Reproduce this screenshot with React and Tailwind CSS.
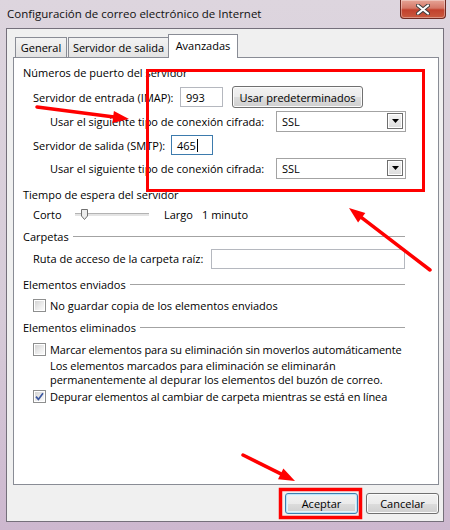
import React from "react";

const RED = "#ff0000";

// Annotation arrow: a thick red shaft with a filled triangular head at (x2, y2)
function Arrow({ x1, y1, x2, y2, head = 16, spread = 6, width = 3.5 }) {
  const dx = x2 - x1;
  const dy = y2 - y1;
  const len = Math.hypot(dx, dy);
  const ux = dx / len;
  const uy = dy / len;
  const bx = x2 - ux * head;
  const by = y2 - uy * head;
  const px = -uy;
  const py = ux;
  const pts = `${x2},${y2} ${bx + px * spread},${by + py * spread} ${bx - px * spread},${by - py * spread}`;
  return (
    <g>
      <line x1={x1} y1={y1} x2={bx + ux * 3} y2={by + uy * 3} stroke={RED} strokeWidth={width} strokeLinecap="round" />
      <polygon points={pts} fill={RED} />
    </g>
  );
}

function GroupTitle({ text, line, className = "" }) {
  return (
    <div className={`flex items-center h-[16px] pl-[9px] pr-[33px] ${className}`}>
      <span className="whitespace-nowrap">{text}</span>
      {line && <div className="flex-1 ml-[4px] h-px bg-[#a3a3a3]" />}
    </div>
  );
}

function Checkbox({ checked }) {
  return (
    <div className="w-[13px] h-[13px] border border-[#8e8f8f] bg-white p-px shrink-0">
      <div className="w-full h-full bg-[linear-gradient(135deg,#d4d4d4_0%,#ededed_60%,#fafafa_100%)] flex items-center justify-center">
        {checked && (
          <svg width="9" height="9" viewBox="0 0 9 9">
            <path d="M1 4.6 L3.4 7.4 L8 1.2" fill="none" stroke="#3b57a0" strokeWidth="1.7" />
          </svg>
        )}
      </div>
    </div>
  );
}

function Select({ value }) {
  return (
    <div className="w-[130px] h-[21px] border border-[#a3a3a3] bg-white flex items-center pl-[5px] pr-[2px]">
      <span className="flex-1">{value}</span>
      <div className="w-[16px] h-[16px] border border-[#6f6f6f] bg-[linear-gradient(to_bottom,#f4f4f4,#dcdcdc)] shadow-[inset_0_0_0_1px_#ffffff] flex items-center justify-center">
        <svg width="7" height="4" viewBox="0 0 7 4">
          <path d="M0 0 H7 L3.5 4 Z" fill="#000" />
        </svg>
      </div>
    </div>
  );
}

function Button({ children, primary, className = "" }) {
  return (
    <div
      className={`flex items-center justify-center rounded-[3px] border bg-[linear-gradient(to_bottom,#f2f2f2_0%,#ebebeb_50%,#dddddd_50%,#cfcfcf_100%)] ${
        primary
          ? "border-[#3c7fb1] shadow-[inset_0_0_0_1px_#bfe4f7,inset_0_0_0_2px_#e3f3fb]"
          : "border-[#707070] shadow-[inset_0_0_0_1px_#fbfbfb]"
      } ${className}`}
    >
      {children}
    </div>
  );
}

function Slider() {
  return (
    <div className="relative w-[74px] h-[12px] flex items-center">
      <div className="w-full h-[3px] border-t border-[#b3b3b3] bg-[#e4e4e4]" />
      <svg className="absolute left-[6px] top-[1px]" width="7" height="11" viewBox="0 0 7 11">
        <path d="M0.5 0.5 H6.5 V7 L3.5 10.5 L0.5 7 Z" fill="#ececec" stroke="#707070" />
      </svg>
    </div>
  );
}

function CloseButton() {
  return (
    <div className="absolute top-0 right-[4px] w-[46px] h-[19px] rounded-b-[4px] border border-t-0 border-[#6e2a22] bg-[linear-gradient(to_bottom,#e6a496_0%,#d57867_45%,#c2412c_55%,#c95a3f_100%)] shadow-[inset_0_0_0_1px_rgba(255,255,255,0.35)] flex items-center justify-center">
      <svg width="14" height="11" viewBox="0 0 14 11">
        <path d="M2 1.5 L12 9.5 M12 1.5 L2 9.5" stroke="#3d3d3d" strokeWidth="4" strokeLinecap="round" />
        <path d="M2 1.5 L12 9.5 M12 1.5 L2 9.5" stroke="#ffffff" strokeWidth="2.2" strokeLinecap="round" />
      </svg>
    </div>
  );
}

export default function App() {
  return (
    <div className="relative w-[450px] h-[530px] overflow-hidden bg-[linear-gradient(to_bottom,#ddd5de_0%,#d6cbd8_60%,#cdb8cf_100%)] font-['Open_Sans',sans-serif] text-[11px] leading-none text-black">
      {/* Title bar */}
      <div className="h-[28px] flex items-center pl-[7px] pb-[1px]">
        <span className="text-[11.5px] text-[#101010]">Configuración de correo electrónico de Internet</span>
      </div>
      <CloseButton />

      {/* Client area */}
      <div className="ml-[6px] w-[438px] h-[494px] bg-[#f0f0f0] border border-[#75707b] flex flex-col">
        {/* Tab strip */}
        <div className="flex items-end h-[28px] pl-[8px] relative z-10">
          <div className="w-[52px] h-[20px] border border-b-0 border-[#898c95] bg-[linear-gradient(to_bottom,#f3f3f3,#e3e3e3)] flex items-center justify-center">
            General
          </div>
          <div className="ml-[1px] w-[101px] h-[20px] border border-b-0 border-[#898c95] bg-[linear-gradient(to_bottom,#f3f3f3,#e3e3e3)] flex items-center justify-center">
            Servidor de salida
          </div>
          <div className="-ml-px -mb-px w-[70px] h-[24px] border border-b-0 border-[#898c95] bg-white flex items-center justify-center pb-[2px]">
            Avanzadas
          </div>
        </div>

        {/* Tab panel */}
        <div className="ml-[6px] w-[426px] h-[428px] border border-[#898c95] bg-white flex flex-col">
          <GroupTitle text="Números de puerto del servidor" className="mt-[6px]" />

          <div className="mt-[6px] h-[22px] flex items-center pl-[19px]">
            <span className="w-[147px] whitespace-nowrap">Servidor de entrada (IMAP):</span>
            <div className="w-[43px] h-[20px] border border-[#b5b8bf] flex items-center pl-[5px]">993</div>
            <Button className="ml-[9px] w-[131px] h-[22px]">Usar predeterminados</Button>
          </div>

          <div className="mt-[2px] h-[22px] flex items-center pl-[36px]">
            <span className="w-[226px] whitespace-nowrap">Usar el siguiente tipo de conexión cifrada:</span>
            <Select value="SSL" />
          </div>

          <div className="mt-[2px] h-[22px] flex items-center pl-[19px]">
            <span className="w-[138px] whitespace-nowrap">Servidor de salida (SMTP):</span>
            <div className="w-[42px] h-[20px] border border-[#3d7bad] flex items-center pl-[5px]">
              465
              <span className="ml-px w-px h-[13px] bg-black" />
            </div>
          </div>

          <div className="mt-[1px] h-[22px] flex items-center pl-[36px]">
            <span className="w-[226px] whitespace-nowrap">Usar el siguiente tipo de conexión cifrada:</span>
            <Select value="SSL" />
          </div>

          <GroupTitle text="Tiempo de espera del servidor" className="mt-[7px]" />

          <div className="mt-[4px] h-[16px] flex items-center pl-[19px]">
            <span className="w-[42px]">Corto</span>
            <Slider />
            <span className="ml-[15px] w-[38px]">Largo</span>
            <span>1 minuto</span>
          </div>

          <GroupTitle text="Carpetas" line className="mt-[6px]" />

          <div className="mt-[4px] h-[21px] flex items-center pl-[19px]">
            <span className="w-[178px] whitespace-nowrap">Ruta de acceso de la carpeta raíz:</span>
            <div className="w-[194px] h-[20px] border border-[#b5b8bf]" />
          </div>

          <GroupTitle text="Elementos enviados" line className="mt-[7px]" />

          <div className="mt-[5px] h-[16px] flex items-center pl-[19px] gap-[4px]">
            <Checkbox />
            <span>No guardar copia de los elementos enviados</span>
          </div>

          <GroupTitle text="Elementos eliminados" line className="mt-[6px]" />

          <div className="mt-[6px] h-[16px] flex items-center pl-[19px] gap-[4px]">
            <Checkbox />
            <span className="whitespace-nowrap tracking-[-0.1px]">Marcar elementos para su eliminación sin moverlos automáticamente</span>
          </div>

          <div className="mt-[2px] pl-[36px] leading-[14px] tracking-[-0.05px]">
            <div>Los elementos marcados para eliminación se eliminarán</div>
            <div>permanentemente al depurar los elementos del buzón de correo.</div>
          </div>

          <div className="mt-[1px] h-[16px] flex items-center pl-[19px] gap-[4px]">
            <Checkbox checked />
            <span className="whitespace-nowrap tracking-[-0.1px]">Depurar elementos al cambiar de carpeta mientras se está en línea</span>
          </div>
        </div>

        {/* Dialog buttons */}
        <div className="mt-[8px] flex justify-end gap-[8px] pr-[4px]">
          <Button primary className="w-[73px] h-[21px]">Aceptar</Button>
          <Button className="w-[73px] h-[21px]">Cancelar</Button>
        </div>
      </div>

      {/* Red annotations drawn over the dialog */}
      <svg className="absolute inset-0 pointer-events-none" width="450" height="530" viewBox="0 0 450 530">
        <rect x="147.5" y="70.5" width="276" height="120" fill="none" stroke={RED} strokeWidth="3" />
        <rect x="280.5" y="489.5" width="80" height="28" fill="none" stroke={RED} strokeWidth="3.5" />
        <Arrow x1={37} y1={107} x2={129} y2={119} />
        <Arrow x1={430} y1={270} x2={349} y2={208} />
        <Arrow x1={243} y1={455} x2={295} y2={481} />
      </svg>
    </div>
  );
}
